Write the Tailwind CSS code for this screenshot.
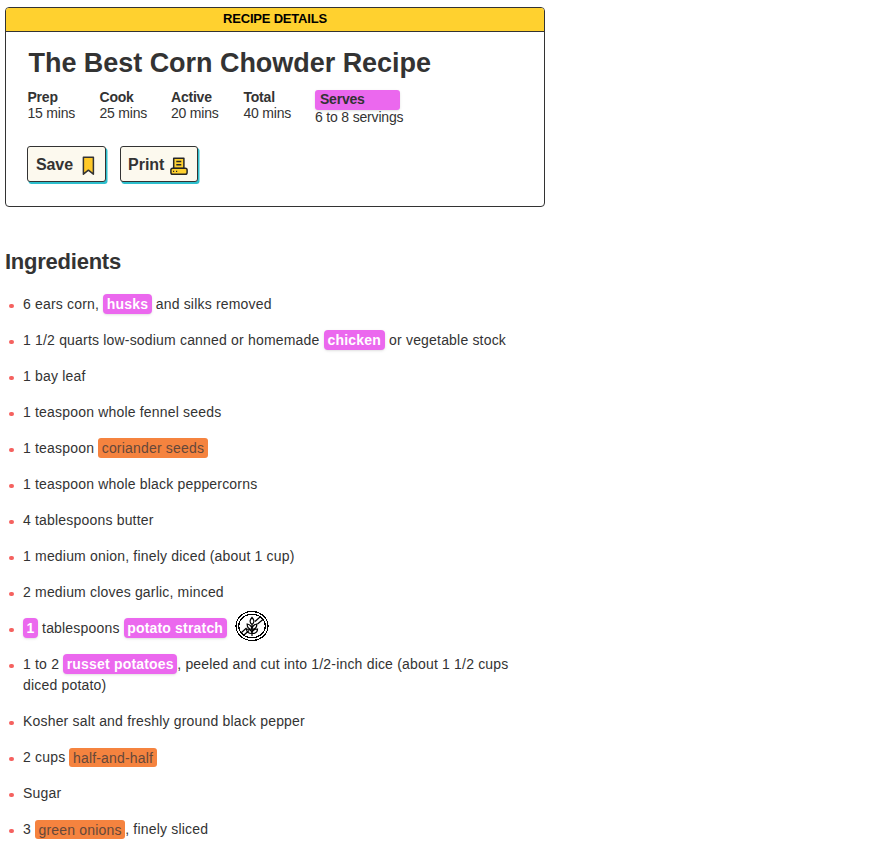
<!DOCTYPE html>
<html lang="en">
<head>
<meta charset="utf-8">
<title>The Best Corn Chowder Recipe</title>
<script src="https://cdn.jsdelivr.net/npm/@tailwindcss/browser@4"></script>
</head>
<body class="bg-white text-[#333] font-['Liberation_Sans',Arial,sans-serif]">
<main class="w-[890px] h-[863px] overflow-hidden pl-[5px] pt-[7px]">
  <section class="w-[540px] h-[200px] border border-[#333] rounded-[4px] overflow-hidden">
    <h2 class="h-[24px] bg-[#ffd12f] border-b border-[#333] text-black text-center text-[13px] leading-[21px] font-bold tracking-[-0.2px]">RECIPE DETAILS</h2>
    <div class="pl-[21px]">
      <h1 class="pl-[1.5px] pt-[14px] text-[27px] leading-[34px] font-bold tracking-[-0.04px]">The Best Corn Chowder Recipe</h1>
      <dl class="flex mt-[9px] text-[14px] leading-[16px] tracking-[-0.22px]">
        <div class="w-[72px] pl-[0.5px]"><dt class="font-bold">Prep</dt><dd>15 mins</dd></div>
        <div class="w-[72px] pl-[0.5px]"><dt class="font-bold">Cook</dt><dd>25 mins</dd></div>
        <div class="w-[72px]"><dt class="font-bold">Active</dt><dd>20 mins</dd></div>
        <div class="w-[72px] pl-[0.5px]"><dt class="font-bold">Total</dt><dd>40 mins</dd></div>
        <div class="pt-px"><dt class="w-[85px] h-[20px] pl-[5px] leading-[19px] rounded-[3px] bg-[#eb68ee] font-bold shadow-sm">Serves</dt><dd class="leading-[14px] tracking-[-0.18px]">6 to 8 servings</dd></div>
      </dl>
      <div class="flex gap-[14px] mt-[22px]">
        <button class="flex items-center w-[79px] h-[36px] pl-[8px] pt-px border border-[#333] rounded-[3px] bg-[#fcf9ee] shadow-[1.5px_2px_0_#2dbfcd] text-[16px] font-bold tracking-[-0.1px]">Save
          <svg class="ml-[9px] mt-[2px]" width="13" height="20" viewBox="0 0 13 20"><path d="M1.4 1.2h10v17l-5-4-5 4z" fill="#ffc928" stroke="#333" stroke-width="1.5" stroke-linejoin="round"/></svg>
        </button>
        <button class="flex items-center w-[78px] h-[36px] pl-[7px] pt-px border border-[#333] rounded-[3px] bg-[#fcf9ee] shadow-[1.5px_2px_0_#2dbfcd] text-[16px] font-bold">Print
          <svg class="ml-[6px] mt-[2px]" width="18" height="18" viewBox="0 0 18 18" fill="#ffd12f" stroke="#262626" stroke-width="1.5" stroke-linejoin="round"><path d="M3.7 11.5V1.2h10.2v10.3z"/><path d="M6.3 4.5h5M6.3 7.7h5"/><rect x=".9" y="11.3" width="16.2" height="5.9" rx="1.8"/><path d="M3 14.4h1.2M6 14.4h1.2" stroke-width="1.2"/></svg>
        </button>
      </div>
    </div>
  </section>
  <section>
    <h2 class="mt-[41px] text-[22px] leading-[28px] font-bold tracking-[-0.24px]">Ingredients</h2>
    <ul class="mt-[18px] w-[540px] text-[14px] leading-[21px] tracking-[0.185px] [&>li]:relative [&>li]:mb-[15px] [&>li]:pl-[18px] [&>li]:before:absolute [&>li]:before:left-[4px] [&>li]:before:top-[10px] [&>li]:before:h-[4px] [&>li]:before:w-[5px] [&>li]:before:rounded-full [&>li]:before:bg-[#f5615f]">
      <li>6 ears corn, <b class="inline-block h-[20px] leading-[20px] px-[3.5px] rounded-[4px] bg-[#eb68ee] text-white shadow align-top">husks</b> and silks removed</li>
      <li>1 1/2 quarts low-sodium canned or homemade <b class="inline-block h-[20px] leading-[20px] px-[4px] rounded-[4px] bg-[#eb68ee] text-white shadow align-top">chicken</b> or vegetable stock</li>
      <li>1 bay leaf</li>
      <li>1 teaspoon whole fennel seeds</li>
      <li>1 teaspoon <span class="inline-block h-[20px] leading-[20px] px-[3.5px] rounded-[3px] bg-[#f5833f] text-[#65483a] align-top">coriander seeds</span></li>
      <li>1 teaspoon whole black peppercorns</li>
      <li>4 tablespoons butter</li>
      <li>1 medium onion, finely diced (about 1 cup)</li>
      <li>2 medium cloves garlic, minced</li>
      <li><b class="inline-block h-[20px] leading-[20px] px-[3.5px] rounded-[4px] bg-[#eb68ee] text-white shadow align-top">1</b> tablespoons <b class="inline-block h-[20px] leading-[20px] px-[3.5px] rounded-[4px] bg-[#eb68ee] text-white shadow align-top">potato stratch</b>
        <svg class="inline-block align-top ml-[4px] -mt-[8px] -mb-[5px]" width="34" height="32" viewBox="0 0 34 32" fill="none" stroke="#000" stroke-width="1.2">
          <ellipse cx="17" cy="16" rx="16" ry="14.5" shape-rendering="crispEdges"/><ellipse cx="17" cy="16" rx="13.2" ry="11.8" shape-rendering="crispEdges"/>
          <path d="M6.5 22.5l5-4.5M9 25l5-4.5M20 11.5l5-4.5M22.5 14l5.5-4.5"/>
          <path d="M17 14v12M17 14.5c-2.8-2.5-2.3-4.5 0-7 2.3 2.5 2.8 4.5 0 7M17 19.5c-3.5-.5-5-2.5-4.8-5.5 2.8.6 4.5 2.5 4.8 5.5c.3-3 2-4.9 4.8-5.5.2 3-1.3 5-4.8 5.5M17 23.5c-3.5 0-5.5-1.7-5.5-4.5 3 .2 5.3 1.6 5.5 4.5c.2-2.9 2.5-4.3 5.5-4.5 0 2.8-2 4.5-5.5 4.5"/>
        </svg></li>
      <li>1 to 2 <b class="inline-block h-[20px] leading-[20px] px-[3.5px] rounded-[4px] bg-[#eb68ee] text-white shadow align-top">russet potatoes</b>, peeled and cut into 1/2-inch dice (about 1 1/2 cups<br>diced potato)</li>
      <li>Kosher salt and freshly ground black pepper</li>
      <li>2 cups <span class="inline-block mt-px h-[19px] leading-[20px] px-[3.5px] rounded-[3px] bg-[#f5833f] text-[#65483a] align-top">half-and-half</span></li>
      <li>Sugar</li>
      <li>3 <span class="inline-block mt-px h-[19px] leading-[20px] px-[3.5px] rounded-[3px] bg-[#f5833f] text-[#65483a] align-top">green onions</span>, finely sliced</li>
    </ul>
  </section>
</main>
</body>
</html>
